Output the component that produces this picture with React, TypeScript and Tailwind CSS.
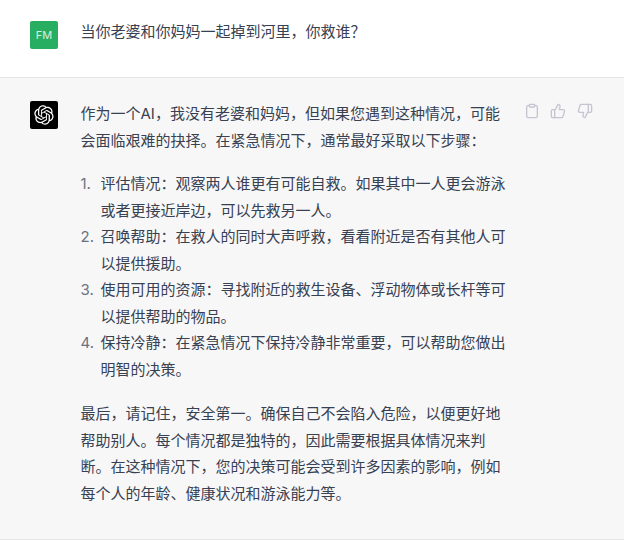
import { Clipboard, ThumbsDown, ThumbsUp } from "lucide-react";

const font = "font-['Inter','Noto_Sans_CJK_SC',sans-serif]";

const steps = [
  "评估情况：观察两人谁更有可能自救。如果其中一人更会游泳或者更接近岸边，可以先救另一人。",
  "召唤帮助：在救人的同时大声呼救，看看附近是否有其他人可以提供援助。",
  "使用可用的资源：寻找附近的救生设备、浮动物体或长杆等可以提供帮助的物品。",
  "保持冷静：在紧急情况下保持冷静非常重要，可以帮助您做出明智的决策。",
];

function OpenAiLogo() {
  return (
    <svg viewBox="0 0 41 41" className="h-[20px] w-[20px]" fill="currentColor">
      <path d="M37.5324 16.8707C37.9808 15.5241 38.1363 14.0974 37.9886 12.6859C37.8409 11.2744 37.3934 9.91076 36.676 8.68622C35.6126 6.83404 33.9882 5.3676 32.0373 4.4985C30.0864 3.62941 27.9098 3.40259 25.8215 3.85078C24.8796 2.7893 23.7219 1.94125 22.4257 1.36341C21.1295 0.785575 19.7249 0.491269 18.3058 0.500197C16.1708 0.495044 14.0893 1.16803 12.3614 2.42214C10.6335 3.67624 9.34853 5.44666 8.6917 7.47815C7.30085 7.76286 5.98686 8.3414 4.8377 9.17505C3.68854 10.0087 2.73073 11.0782 2.02839 12.312C0.956464 14.1591 0.498905 16.2988 0.721698 18.4228C0.944492 20.5467 1.83612 22.5449 3.268 24.1293C2.81966 25.4759 2.66413 26.9026 2.81182 28.3141C2.95951 29.7256 3.40701 31.0892 4.12437 32.3138C5.18791 34.1659 6.8123 35.6322 8.76321 36.5013C10.7141 37.3704 12.8907 37.5973 14.9789 37.1492C15.9208 38.2107 17.0786 39.0587 18.3747 39.6366C19.6709 40.2144 21.0755 40.5087 22.4946 40.4998C24.6307 40.5054 26.7133 39.8321 28.4418 38.5772C30.1704 37.3223 31.4556 35.5506 32.1119 33.5179C33.5027 33.2332 34.8167 32.6547 35.9659 31.821C37.115 30.9874 38.0728 29.9178 38.7752 28.684C39.8458 26.8371 40.3023 24.6979 40.0789 22.5748C39.8556 20.4517 38.9639 18.4544 37.5324 16.8707ZM22.4978 37.8849C20.7443 37.8874 19.0459 37.2733 17.6994 36.1501C17.7601 36.117 17.8666 36.0586 17.936 36.0161L25.9004 31.4156C26.1003 31.3019 26.2663 31.137 26.3813 30.9378C26.4964 30.7386 26.5563 30.5124 26.5549 30.2825V19.0542L29.9213 20.998C29.9389 21.0068 29.9541 21.0198 29.9656 21.0359C29.977 21.052 29.9842 21.0707 29.9867 21.0902V30.3889C29.9842 32.375 29.1946 34.2791 27.7909 35.6841C26.3872 37.0892 24.4838 37.8806 22.4978 37.8849ZM6.39227 31.0064C5.51397 29.4888 5.19742 27.7107 5.49804 25.9832C5.55718 26.0187 5.66048 26.0818 5.73461 26.1244L13.699 30.7248C13.8975 30.8408 14.1233 30.902 14.3532 30.902C14.583 30.902 14.8088 30.8408 15.0073 30.7248L24.731 25.1103V28.9979C24.7321 29.0177 24.7283 29.0376 24.7199 29.0556C24.7115 29.0736 24.6988 29.0893 24.6829 29.1012L16.6317 33.7497C14.9096 34.7416 12.8643 35.0097 10.9447 34.4954C9.02506 33.9811 7.38785 32.7263 6.39227 31.0064ZM4.29707 13.6194C5.17156 12.0998 6.55279 10.9364 8.19885 10.3327C8.19885 10.4013 8.19491 10.5228 8.19491 10.6071V19.808C8.19351 20.0378 8.25334 20.2638 8.36823 20.4629C8.48312 20.6619 8.64893 20.8267 8.84863 20.9404L18.5723 26.5542L15.206 28.4979C15.1894 28.5089 15.1703 28.5155 15.1505 28.5173C15.1307 28.5191 15.1107 28.516 15.0924 28.5082L7.04046 23.8557C5.32135 22.8601 4.06716 21.2235 3.55289 19.3046C3.03862 17.3858 3.30624 15.3413 4.29707 13.6194ZM31.955 20.0556L22.2312 14.4411L25.5976 12.4981C25.6142 12.4872 25.6333 12.4805 25.6531 12.4787C25.6729 12.4769 25.6928 12.4801 25.7111 12.4879L33.7631 17.1364C34.9967 17.849 36.0017 18.8982 36.6606 20.1613C37.3194 21.4244 37.6047 22.849 37.4832 24.2684C37.3617 25.6878 36.8382 27.0432 35.9743 28.1759C35.1103 29.3086 33.9415 30.1717 32.6047 30.6641C32.6047 30.5947 32.6047 30.4733 32.6047 30.3889V21.188C32.6066 20.9586 32.5474 20.7328 32.4332 20.5338C32.319 20.3348 32.154 20.1698 31.955 20.0556ZM35.3055 15.0128C35.2464 14.9765 35.1431 14.9142 35.069 14.8717L27.1045 10.2712C26.906 10.1554 26.6803 10.0943 26.4504 10.0943C26.2206 10.0943 25.9948 10.1554 25.7963 10.2712L16.0726 15.8858V11.9982C16.0715 11.9783 16.0753 11.9585 16.0837 11.9405C16.0921 11.9225 16.1048 11.9068 16.1207 11.8949L24.1719 7.25025C25.4053 6.53903 26.8158 6.19376 28.2383 6.25482C29.6608 6.31589 31.0364 6.78077 32.2044 7.59508C33.3723 8.40939 34.2842 9.53945 34.8334 10.8531C35.3826 12.1667 35.5464 13.6095 35.3055 15.0128ZM14.2424 21.9419L10.8752 19.9981C10.8576 19.9893 10.8423 19.9763 10.8309 19.9602C10.8195 19.9441 10.8122 19.9254 10.8098 19.9058V10.6071C10.8107 9.18295 11.2173 7.78848 11.9819 6.58696C12.7466 5.38544 13.8377 4.42659 15.1275 3.82264C16.4173 3.21869 17.8524 2.99464 19.2649 3.1767C20.6775 3.35876 22.0089 3.93941 23.1034 4.85067C23.0427 4.88379 22.937 4.94215 22.8668 4.98473L14.9024 9.58517C14.7025 9.69878 14.5366 9.86356 14.4215 10.0626C14.3065 10.2616 14.2466 10.4877 14.2479 10.7175L14.2424 21.9419ZM16.071 17.9991L20.4018 15.4978L24.7325 17.9975V22.9985L20.4018 25.4983L16.071 22.9985V17.9991Z" />
    </svg>
  );
}

export default function App() {
  return (
    <div className={`${font} h-[540px] w-[624px] overflow-hidden bg-white text-[15px] leading-[26.5px] text-[#374151]`}>
      <div className="flex h-[78px] border-b border-[#e5e5e5] pl-[30px] pt-[21px]">
        <div className="flex h-[28px] w-[28px] items-center justify-center rounded-[2px] bg-[#27ae60] text-[11px] text-white/80">
          FM
        </div>
        <p className="ml-[22.5px] -mt-[2px]">当你老婆和你妈妈一起掉到河里，你救谁？</p>
      </div>
      <div className="flex h-[462px] border-b border-[#e5e5e5] bg-[#f7f7f8] pl-[30px] pt-[23px]">
        <div className="flex h-[28px] w-[28px] shrink-0 items-center justify-center rounded-[2px] bg-black text-white">
          <OpenAiLogo />
        </div>
        <div className="ml-[22.5px] w-[427.5px] shrink-0">
          <p>作为一个AI，我没有老婆和妈妈，但如果您遇到这种情况，可能会面临艰难的抉择。在紧急情况下，通常最好采取以下步骤：</p>
          <ol className="mt-[17px]">
            {steps.map((step, i) => (
              <li key={step} className="flex">
                <span className="w-[20px] shrink-0 text-[#6b7280]">{i + 1}.</span>
                <span>{step}</span>
              </li>
            ))}
          </ol>
          <p className="mt-[18px]">最后，请记住，安全第一。确保自己不会陷入危险，以便更好地帮助别人。每个情况都是独特的，因此需要根据具体情况来判断。在这种情况下，您的决策可能会受到许多因素的影响，例如每个人的年龄、健康状况和游泳能力等。</p>
        </div>
        <div className="ml-[15.5px] mt-[2px] flex h-[16px] gap-[10.5px] text-[#c5c5d2]">
          <Clipboard size={16} strokeWidth={2} />
          <ThumbsUp size={16} strokeWidth={2} />
          <ThumbsDown size={16} strokeWidth={2} />
        </div>
      </div>
    </div>
  );
}
